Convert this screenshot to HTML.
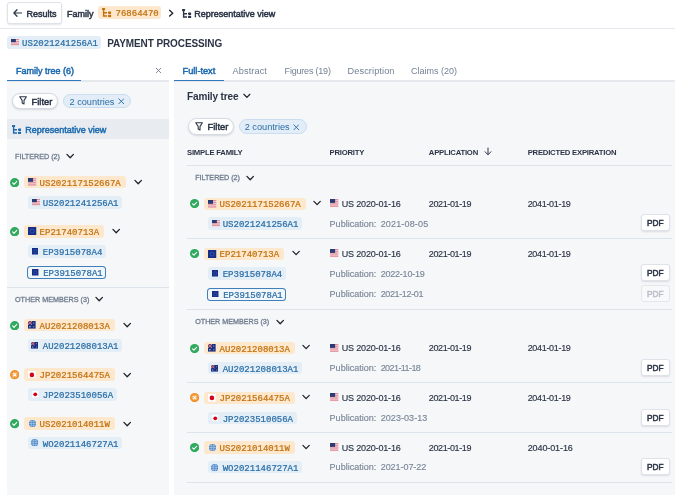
<!DOCTYPE html>
<html lang="en">
<head>
<meta charset="utf-8">
<title>Family tree - PAYMENT PROCESSING</title>
<style>
*{box-sizing:border-box;margin:0;padding:0}
html,body{width:675px;height:495px;overflow:hidden;background:#fff}
body{font-family:"Liberation Sans",sans-serif;font-size:9px;color:#2b3446;position:relative}
#app{position:absolute;left:0;top:0;width:675px;height:495px;background:#fff;will-change:transform}
.abs{position:absolute}
.row{position:absolute;display:flex;align-items:center;white-space:nowrap}
.md{font-weight:normal;-webkit-text-stroke:0.5px currentColor}
#topbar{position:absolute;left:0;top:0;width:675px;height:29px;border-bottom:1px solid #e4e8ed;background:#fff}
.btn{position:absolute;display:flex;align-items:center;justify-content:center;background:#fff;border:1px solid #dfe3e9;border-radius:3px;box-shadow:0 1px 2px rgba(40,50,70,.13);-webkit-text-stroke:0.5px currentColor;color:#2b3446;white-space:nowrap}
.chip{display:inline-flex;align-items:center;height:12.5px;border-radius:3px;padding:0 0 0 4.5px;font-family:"Liberation Mono",monospace;font-size:9.03px;white-space:nowrap;-webkit-text-stroke:0.22px currentColor}
.chip .t{position:relative;top:1.2px}
.chip.o{background:#fde8cd;color:#c2710f}
.chip.b{background:#e4eef7;color:#2a6ea6}
.chip.sel{background:#f1f6fb;box-shadow:inset 0 0 0 1px #3f7fba;border-radius:3.5px}
.flag{display:inline-flex;align-items:center;width:11.3px;flex:none}
.flag svg{display:block;flex:none}
.caps{color:#6f7d90;-webkit-text-stroke:0.3px currentColor}
.pill{position:absolute;display:flex;align-items:center;border-radius:8.5px;white-space:nowrap}
.pill.f{background:#fff;border:1px solid #d5dbe3;box-shadow:0 1px 2px rgba(40,50,70,.16);-webkit-text-stroke:0.5px currentColor;color:#2b3446}
.pill.c{background:#e2edf7;border:1px solid #cbddee;color:#2a6ea6}
.hr{position:absolute;height:1px;background:#dce3eb}
.st{position:absolute;width:9.4px;height:9.4px}
.chev{display:inline-block;width:8.4px;height:6.3px;flex:none}
#left{position:absolute;left:7px;top:81px;width:162px;height:414px;background:#f6f7f9}
#right{position:absolute;left:174px;top:82px;width:501px;height:413px;background:#f6f7f9}
.tab{position:absolute;top:65.8px;height:11px;line-height:11px;font-size:9px;color:#748295;white-space:nowrap}
.tab.on{color:#1e6bb0;-webkit-text-stroke:0.5px currentColor}
.th{position:absolute;top:148px;font-size:7.700px;letter-spacing:-0.215px;font-weight:bold;color:#2b3446;line-height:10px;white-space:nowrap}
.td{position:absolute;font-size:9px;line-height:11px;color:#2b3446;white-space:nowrap;-webkit-text-stroke:0.15px currentColor}
.muted{color:#7a8899}
.pdf{position:absolute;left:640.600px;width:29.200px;height:17px;font-size:8.300px;padding-top:1px}
.pdf.dis{color:#b9c0ca;box-shadow:none;border-color:#e3e7ec;background:#f8f9fa}
</style>
</head>
<body>
<svg width="0" height="0" style="position:absolute">
  <defs>
    <symbol id="us" viewBox="0 0 16 15" preserveAspectRatio="none"><rect width="16" height="15" fill="#f6e6e9"/><g fill="#d9727e"><rect y="0.500" width="16" height="1.800"/><rect y="4.200" width="16" height="1.800"/><rect y="8" width="16" height="1.800"/><rect y="11.800" width="16" height="1.800"/></g><rect width="9.500" height="7" fill="#2b3a73"/></symbol>
    <symbol id="eu" viewBox="0 0 16 15" preserveAspectRatio="none"><rect width="16" height="15" fill="#16308a"/><circle cx="8" cy="7.5" r="3.6" fill="none" stroke="#4a62ab" stroke-width="1.2"/></symbol>
    <symbol id="au" viewBox="0 0 16 15" preserveAspectRatio="none"><rect width="16" height="15" fill="#1b2f7d"/><path d="M0 0L8 7M8 0L0 7" stroke="#e9d6de" stroke-width="1.600"/><path d="M4 0V7M0 3.500H8" stroke="#d6475a" stroke-width="1.600"/><circle cx="4" cy="11" r="1.300" fill="#e8ecf6"/><circle cx="12" cy="4" r="1" fill="#e8ecf6"/><circle cx="12" cy="11" r="1" fill="#e8ecf6"/></symbol>
    <symbol id="jp" viewBox="0 0 16 16" preserveAspectRatio="none"><rect width="16" height="16" fill="#fff"/><circle cx="8" cy="8" r="4.700" fill="#d5001c"/></symbol>
    <symbol id="wo" viewBox="0 0 14 14"><circle cx="7" cy="7" r="7" fill="#3b7cc4"/><ellipse cx="7" cy="7" rx="3" ry="7" fill="none" stroke="#cfe0f3" stroke-width="1"/><path d="M0 7H14M1.200 3.600H12.800M1.200 10.400H12.800" stroke="#cfe0f3" stroke-width="1" fill="none"/></symbol>
    <symbol id="ok" viewBox="0 0 20 20"><circle cx="10" cy="10" r="10" fill="#2faa5e"/><path d="M5.6 10.4l3 3 5.8-6.200" fill="none" stroke="#fff" stroke-width="2.400" stroke-linecap="round" stroke-linejoin="round"/></symbol>
    <symbol id="no" viewBox="0 0 20 20"><circle cx="10" cy="10" r="10" fill="#f2922a"/><circle cx="10" cy="10" r="6" fill="#f6ac5c"/><path d="M7.200 7.200l5.600 5.600M12.800 7.200l-5.600 5.600" stroke="#fff" stroke-width="2.300" stroke-linecap="round"/></symbol>
    <symbol id="cv" viewBox="0 0 16 12"><path d="M1.800 2.600l6.200 6.400L14.200 2.600" fill="none" stroke="#20242c" stroke-width="2.500" stroke-linecap="round" stroke-linejoin="round"/></symbol>
    <symbol id="tree" viewBox="0 0 94 94"><path d="M16 18V80H50M16 47H50" fill="none" stroke="currentColor" stroke-width="14"/><rect x="0" y="0" width="31" height="21" rx="6" fill="currentColor"/><rect x="60" y="34" width="34" height="25" rx="8" fill="currentColor"/><rect x="60" y="68" width="34" height="25" rx="8" fill="currentColor"/></symbol>
    <symbol id="funnel" viewBox="0 0 16 18"><path d="M1.500 1.500H14.500L9.800 8.500V15.500L6.200 13.500V8.500Z" fill="none" stroke="#2b3446" stroke-width="2.100" stroke-linejoin="round"/></symbol>
    <symbol id="xx" viewBox="0 0 12 12"><path d="M1.500 1.500l9 9M10.500 1.500l-9 9" stroke="#2a6ea6" stroke-width="1.700" stroke-linecap="round"/></symbol>
  </defs>
</svg>
<div id="app">

<header>
<!-- TOP BAR -->
<nav id="topbar">
  <div class="btn" style="left:7px;top:2px;width:54.5px;height:21.6px;font-size:9px;padding:1.6px 0 0 0.5px">
    <svg width="9" height="8" viewBox="0 0 18 16" style="margin-right:4.300px;margin-left:0.700px;position:relative;top:-0.600px"><path d="M8 1.500L1.800 8l6.200 6.500M2 8H17" fill="none" stroke="#2b3446" stroke-width="2.400" stroke-linecap="round" stroke-linejoin="round"/></svg>Results
  </div>
  <div class="row md" style="left:67px;top:7.8px;height:12px;font-size:9px">Family</div>
  <div class="row chip o" style="left:98.3px;top:6.2px;width:62.7px;height:12.8px;padding:0 0 0 4px">
    <svg width="9.400" height="9.400" style="margin-right:3.800px;color:#c2710f;position:relative;top:0.500px"><use href="#tree"/></svg><span class="t">76864470</span>
  </div>
  <svg class="abs" style="left:167.8px;top:9px" width="6.4" height="8.400" viewBox="0 0 12 16"><path d="M3 2.500l6 5.500-6 5.500" fill="none" stroke="#20242c" stroke-width="2.500" stroke-linecap="round" stroke-linejoin="round"/></svg>
  <svg class="abs" style="left:182.300px;top:8.900px;color:#2b3446" width="9.400" height="9.400"><use href="#tree"/></svg>
  <div class="row md" style="left:194.3px;top:7.8px;height:12px;font-size:9px">Representative view</div>
</nav>

<!-- TITLE -->
<div class="row chip b" style="left:7.2px;top:36.3px;width:93.6px;height:12.7px;padding-left:3.6px"><span class="flag"><svg width="8.2" height="6.8" style="margin-left:0.2px"><use href="#us"/></svg></span><span class="t">US2021241256A1</span></div>
<h1 class="row" style="left:107.2px;top:37px;height:13px;font-size:10px;font-weight:bold;letter-spacing:-0.1px">PAYMENT PROCESSING</h1>
</header>

<aside>
<!-- LEFT PANEL -->
<div class="tab on" style="left:16px">Family tree (6)</div>
<svg class="abs" style="left:155px;top:67px" width="7" height="7" viewBox="0 0 14 14"><path d="M2.500 2.500l9 9M11.500 2.500l-9 9" stroke="#5f6b7b" stroke-width="1.600" stroke-linecap="round"/></svg>
<div id="left"></div>
<div class="hr" style="left:7px;top:80px;width:162px;height:2px;background:#e5e9ee"></div>
<div class="abs" style="left:7px;top:79.500px;width:74.300px;height:1.700px;background:#2f78bd"></div>
<div class="pill f" style="left:11.500px;top:92.700px;width:46.500px;height:16.500px;font-size:9.3px;padding:1.2px 0 0 6px">
  <svg width="8.200" height="9.300" style="margin-right:4.900px;position:relative;top:-0.400px"><use href="#funnel"/></svg>Filter
</div>
<div class="pill c" style="left:63px;top:93.600px;width:67.500px;height:14.800px;font-size:9.200px;padding:1.800px 0 0 5.500px">2 countries
  <svg width="6.600" height="6.600" style="margin-left:3.200px;position:relative;top:-0.500px"><use href="#xx"/></svg>
</div>
<div class="abs" style="left:7px;top:119px;width:162px;height:20.400px;background:#e8ecf0"></div>
<svg class="abs" style="left:12.100px;top:124.900px;color:#1e6bb0" width="9.400" height="9.400"><use href="#tree"/></svg>
<div class="row md" style="left:25.3px;top:124px;height:12px;color:#1e6bb0;font-size:9px">Representative view</div>
<div class="row caps" style="left:15px;top:151.5px;height:10px;font-size:7.2px">FILTERED (2)<svg class="chev" style="margin-left:6px;position:relative;top:-0.5px"><use href="#cv"/></svg></div>

<!-- left family US202117152667A -->
<svg class="st" style="left:9.600px;top:177.9px"><use href="#ok"/></svg>
<div class="row chip o" style="left:24px;top:175.9px;width:101.7px;height:12.5px;padding-left:4.3px"><span class="flag"><svg width="8.5" height="8.2" style="margin-left:0px"><use href="#us"/></svg></span><span class="t">US202117152667A</span></div>
<svg class="abs chev" style="left:133.7px;top:179.2px"><use href="#cv"/></svg>
<div class="row chip b" style="left:27.9px;top:196.1px;width:94.18px;height:12.5px;padding-left:3.6px"><span class="flag"><svg width="8.2" height="6.8" style="margin-left:0.2px"><use href="#us"/></svg></span><span class="t">US2021241256A1</span></div>
<!-- left family EP21740713A -->
<svg class="st" style="left:9.600px;top:227px"><use href="#ok"/></svg>
<div class="row chip o" style="left:24px;top:225px;width:80.02px;height:12.5px;padding-left:4.3px"><span class="flag"><svg width="8.5" height="8.2" style="margin-left:0px"><use href="#eu"/></svg></span><span class="t">EP21740713A</span></div>
<svg class="abs chev" style="left:112.02px;top:228.3px"><use href="#cv"/></svg>
<div class="row chip b" style="left:27.9px;top:245.3px;width:77.92px;height:12.5px;padding-left:3.6px"><span class="flag"><svg width="6.7" height="6.7" style="margin-left:0.2px"><use href="#eu"/></svg></span><span class="t">EP3915078A4</span></div>
<div class="row chip b sel" style="left:27.3px;top:265.5px;width:78.92px;height:13.5px;padding-left:4.6px"><span class="flag"><svg width="6.7" height="6.7" style="margin-left:0.2px"><use href="#eu"/></svg></span><span class="t">EP3915078A1</span></div>
<div class="hr" style="left:7px;top:287px;width:162px"></div>
<div class="row caps" style="left:15px;top:294.5px;height:10px;font-size:7.2px">OTHER MEMBERS (3)<svg class="chev" style="margin-left:6px;position:relative;top:-0.5px"><use href="#cv"/></svg></div>
<!-- left family AU2021208013A -->
<svg class="st" style="left:9.600px;top:320.7px"><use href="#ok"/></svg>
<div class="row chip o" style="left:24px;top:318.7px;width:90.86px;height:12.5px;padding-left:4.3px"><span class="flag"><svg width="7.8" height="7.8" style="margin-left:0.1px"><use href="#au"/></svg></span><span class="t">AU2021208013A</span></div>
<svg class="abs chev" style="left:122.86px;top:322px"><use href="#cv"/></svg>
<div class="row chip b" style="left:27.9px;top:339.2px;width:94.18px;height:12.5px;padding-left:3.6px"><span class="flag"><svg width="7.1" height="6.8" style="margin-left:-0.4px"><use href="#au"/></svg></span><span class="t">AU2021208013A1</span></div>
<!-- left family JP2021564475A -->
<svg class="st" style="left:9.600px;top:370.3px"><use href="#no"/></svg>
<div class="row chip o" style="left:24px;top:368.3px;width:90.86px;height:12.5px;padding-left:4.3px"><span class="flag"><svg width="7.8" height="7.8" style="margin-left:0px"><use href="#jp"/></svg></span><span class="t">JP2021564475A</span></div>
<svg class="abs chev" style="left:122.86px;top:371.6px"><use href="#cv"/></svg>
<div class="row chip b" style="left:27.9px;top:388.4px;width:88.76px;height:12.5px;padding-left:3.6px"><span class="flag"><svg width="6.5" height="6.7" style="margin-left:0.6px"><use href="#jp"/></svg></span><span class="t">JP2023510056A</span></div>
<!-- left family US2021014011W -->
<svg class="st" style="left:9.600px;top:419.2px"><use href="#ok"/></svg>
<div class="row chip o" style="left:24px;top:417.2px;width:90.86px;height:12.5px;padding-left:4.3px"><span class="flag"><svg width="7" height="7" style="margin-left:0.5px"><use href="#wo"/></svg></span><span class="t">US2021014011W</span></div>
<svg class="abs chev" style="left:122.86px;top:420.5px"><use href="#cv"/></svg>
<div class="row chip b" style="left:27.9px;top:436.6px;width:94.18px;height:12.5px;padding-left:3.6px"><span class="flag"><svg width="7.3" height="7.3" style="margin-left:0px"><use href="#wo"/></svg></span><span class="t">WO2021146727A1</span></div>

</aside>
<main>
<!-- RIGHT PANEL -->
<div class="tab on" style="left:182.6px;font-size:9.2px">Full-text</div>
<div class="tab" style="left:232.5px;font-size:9.2px;letter-spacing:0.1px">Abstract</div>
<div class="tab" style="left:284.6px;font-size:9px;letter-spacing:-0.2px">Figures (19)</div>
<div class="tab" style="left:347.5px;font-size:9.2px;letter-spacing:0.1px">Description</div>
<div class="tab" style="left:411px;font-size:9px">Claims (20)</div>
<div id="right"></div>
<div class="hr" style="left:174px;top:80px;width:501px;height:2px;background:#e5e9ee"></div>
<div class="abs" style="left:174px;top:79.500px;width:50px;height:1.700px;background:#2f78bd"></div>
<div class="row" style="left:187px;top:90.5px;height:12px;font-size:10px;font-weight:bold;letter-spacing:-0.13px">Family tree<svg class="chev" style="margin-left:4.400px;width:7.800px;height:5.900px;position:relative;top:-0.700px"><use href="#cv"/></svg></div>
<div class="pill f" style="left:187.500px;top:118px;width:46.500px;height:16.800px;font-size:9.300px;padding:1.600px 0 0 6px">
  <svg width="8.200" height="9.300" style="margin-right:4.900px;position:relative;top:-0.400px"><use href="#funnel"/></svg>Filter
</div>
<div class="pill c" style="left:239px;top:119px;width:67.500px;height:15px;font-size:9.200px;padding:1.800px 0 0 4.700px">2 countries
  <svg width="6.600" height="6.600" style="margin-left:3.200px;position:relative;top:-0.500px"><use href="#xx"/></svg>
</div>
<div class="th" style="left:187px">SIMPLE FAMILY</div>
<div class="th" style="left:329.6px">PRIORITY</div>
<div class="th" style="left:428.8px">APPLICATION</div>
<svg class="abs" style="left:484px;top:147.400px" width="8" height="9" viewBox="0 0 16 18"><path d="M8 2V15M2.200 9.500L8 15.500L13.800 9.500" fill="none" stroke="#2b3446" stroke-width="2" stroke-linecap="round" stroke-linejoin="round"/></svg>
<div class="th" style="left:527.7px">PREDICTED EXPIRATION</div>
<div class="hr" style="left:187px;top:165px;width:485px"></div>
<div class="row caps" style="left:195.2px;top:173.400px;height:10px;font-size:7.160px">FILTERED (2)<svg class="chev" style="margin-left:6.5px;position:relative;top:-0.5px"><use href="#cv"/></svg></div>

<!-- family row US202117152667A -->
<svg class="st" style="left:189.600px;top:199.1px;width:9.200px;height:9.200px"><use href="#ok"/></svg>
<div class="row chip o" style="left:204px;top:197.6px;width:101.7px;height:12.2px;padding-left:4.3px"><span class="flag"><svg width="8.5" height="8.2" style="margin-left:0px"><use href="#us"/></svg></span><span class="t">US202117152667A</span></div>
<svg class="abs chev" style="left:313.3px;top:200px;width:8.200px;height:6.200px"><use href="#cv"/></svg>
<svg class="abs" style="left:330px;top:199.4px" width="8.600" height="8.400"><use href="#us"/></svg>
<div class="td" style="left:341.7px;top:198.8px;letter-spacing:-0.165px">US 2020-01-16</div>
<div class="td" style="left:428.8px;top:198.8px;letter-spacing:-0.37px">2021-01-19</div>
<div class="td" style="left:527.7px;top:198.8px;letter-spacing:-0.32px">2041-01-19</div>
<div class="row chip b" style="left:207.8px;top:217.4px;width:94.18px;height:12.4px;padding-left:3.6px"><span class="flag"><svg width="8.2" height="6.8" style="margin-left:0.2px"><use href="#us"/></svg></span><span class="t">US2021241256A1</span></div>
<div class="td muted" style="left:329.6px;top:218.7px;letter-spacing:0.02px">Publication: <span style="position:absolute;left:51.100px;top:0;letter-spacing:0.16px">2021-08-05</span></div>
<div class="btn pdf" style="top:214.4px">PDF</div>
<div class="hr" style="left:187px;top:238px;width:485px"></div>
<!-- family row EP21740713A -->
<svg class="st" style="left:189.600px;top:249.1px;width:9.200px;height:9.200px"><use href="#ok"/></svg>
<div class="row chip o" style="left:204px;top:247.6px;width:80.02px;height:12.2px;padding-left:4.3px"><span class="flag"><svg width="8.5" height="8.2" style="margin-left:0px"><use href="#eu"/></svg></span><span class="t">EP21740713A</span></div>
<svg class="abs chev" style="left:291.62px;top:250px;width:8.200px;height:6.200px"><use href="#cv"/></svg>
<svg class="abs" style="left:330px;top:249.4px" width="8.600" height="8.400"><use href="#us"/></svg>
<div class="td" style="left:341.7px;top:248.8px;letter-spacing:-0.165px">US 2020-01-16</div>
<div class="td" style="left:428.8px;top:248.8px;letter-spacing:-0.37px">2021-01-19</div>
<div class="td" style="left:527.7px;top:248.8px;letter-spacing:-0.32px">2041-01-19</div>
<div class="row chip b" style="left:207.8px;top:267.3px;width:77.92px;height:12.4px;padding-left:3.6px"><span class="flag"><svg width="6.7" height="6.7" style="margin-left:0.2px"><use href="#eu"/></svg></span><span class="t">EP3915078A4</span></div>
<div class="td muted" style="left:329.6px;top:268.6px;letter-spacing:0.02px">Publication: <span style="position:absolute;left:51.100px;top:0;letter-spacing:-0.22px">2022-10-19</span></div>
<div class="btn pdf" style="top:264.3px">PDF</div>
<div class="row chip b sel" style="left:207.3px;top:287.5px;width:78.92px;height:13.2px;padding-left:4.6px"><span class="flag"><svg width="6.7" height="6.7" style="margin-left:0.2px"><use href="#eu"/></svg></span><span class="t">EP3915078A1</span></div>
<div class="td muted" style="left:329.6px;top:289.2px;letter-spacing:0.02px">Publication: <span style="position:absolute;left:51.100px;top:0;letter-spacing:-0.37px">2021-12-01</span></div>
<div class="btn pdf dis" style="top:284.9px">PDF</div>
<div class="hr" style="left:187px;top:308.5px;width:485px"></div>
<div class="row caps" style="left:195.2px;top:317.400px;height:10px;font-size:7.160px">OTHER MEMBERS (3)<svg class="chev" style="margin-left:6.500px;position:relative;top:-0.500px"><use href="#cv"/></svg></div>
<!-- family row AU2021208013A -->
<svg class="st" style="left:189.600px;top:343.5px;width:9.200px;height:9.200px"><use href="#ok"/></svg>
<div class="row chip o" style="left:204px;top:342px;width:90.86px;height:12.2px;padding-left:4.3px"><span class="flag"><svg width="7.8" height="7.8" style="margin-left:0.1px"><use href="#au"/></svg></span><span class="t">AU2021208013A</span></div>
<svg class="abs chev" style="left:302.46px;top:344.4px;width:8.200px;height:6.200px"><use href="#cv"/></svg>
<svg class="abs" style="left:330px;top:343.8px" width="8.600" height="8.400"><use href="#us"/></svg>
<div class="td" style="left:341.7px;top:343.2px;letter-spacing:-0.165px">US 2020-01-16</div>
<div class="td" style="left:428.8px;top:343.2px;letter-spacing:-0.37px">2021-01-19</div>
<div class="td" style="left:527.7px;top:343.2px;letter-spacing:-0.32px">2041-01-19</div>
<div class="row chip b" style="left:207.8px;top:362.1px;width:94.18px;height:12.4px;padding-left:3.6px"><span class="flag"><svg width="7.1" height="6.8" style="margin-left:-0.4px"><use href="#au"/></svg></span><span class="t">AU2021208013A1</span></div>
<div class="td muted" style="left:329.6px;top:363.4px;letter-spacing:0.02px">Publication: <span style="position:absolute;left:51.100px;top:0;letter-spacing:-0.58px">2021-11-18</span></div>
<div class="btn pdf" style="top:359.1px">PDF</div>
<div class="hr" style="left:187px;top:382px;width:485px"></div>
<!-- family row JP2021564475A -->
<svg class="st" style="left:189.600px;top:393.1px;width:9.200px;height:9.200px"><use href="#no"/></svg>
<div class="row chip o" style="left:204px;top:391.6px;width:90.86px;height:12.2px;padding-left:4.3px"><span class="flag"><svg width="7.8" height="7.8" style="margin-left:0px"><use href="#jp"/></svg></span><span class="t">JP2021564475A</span></div>
<svg class="abs chev" style="left:302.46px;top:394px;width:8.200px;height:6.200px"><use href="#cv"/></svg>
<svg class="abs" style="left:330px;top:393.4px" width="8.600" height="8.400"><use href="#us"/></svg>
<div class="td" style="left:341.7px;top:392.8px;letter-spacing:-0.165px">US 2020-01-16</div>
<div class="td" style="left:428.8px;top:392.8px;letter-spacing:-0.37px">2021-01-19</div>
<div class="td" style="left:527.7px;top:392.8px;letter-spacing:-0.32px">2041-01-19</div>
<div class="row chip b" style="left:207.8px;top:411.7px;width:88.76px;height:12.4px;padding-left:3.6px"><span class="flag"><svg width="6.5" height="6.7" style="margin-left:0.6px"><use href="#jp"/></svg></span><span class="t">JP2023510056A</span></div>
<div class="td muted" style="left:329.6px;top:413px;letter-spacing:0.02px">Publication: <span style="position:absolute;left:51.100px;top:0;letter-spacing:0.06px">2023-03-13</span></div>
<div class="btn pdf" style="top:408.7px">PDF</div>
<div class="hr" style="left:187px;top:431.5px;width:485px"></div>
<!-- family row US2021014011W -->
<svg class="st" style="left:189.600px;top:442.9px;width:9.200px;height:9.200px"><use href="#ok"/></svg>
<div class="row chip o" style="left:204px;top:441.4px;width:90.86px;height:12.2px;padding-left:4.3px"><span class="flag"><svg width="7" height="7" style="margin-left:0.5px"><use href="#wo"/></svg></span><span class="t">US2021014011W</span></div>
<svg class="abs chev" style="left:302.46px;top:443.8px;width:8.200px;height:6.200px"><use href="#cv"/></svg>
<svg class="abs" style="left:330px;top:443.2px" width="8.600" height="8.400"><use href="#us"/></svg>
<div class="td" style="left:341.7px;top:442.6px;letter-spacing:-0.165px">US 2020-01-16</div>
<div class="td" style="left:428.8px;top:442.6px;letter-spacing:-0.37px">2021-01-19</div>
<div class="td" style="left:527.7px;top:442.6px;letter-spacing:-0.1px">2040-01-16</div>
<div class="row chip b" style="left:207.8px;top:461px;width:94.18px;height:12.4px;padding-left:3.6px"><span class="flag"><svg width="7.3" height="7.3" style="margin-left:0px"><use href="#wo"/></svg></span><span class="t">WO2021146727A1</span></div>
<div class="td muted" style="left:329.6px;top:462.3px;letter-spacing:0.02px">Publication: <span style="position:absolute;left:51.100px;top:0;letter-spacing:-0.05px">2021-07-22</span></div>
<div class="btn pdf" style="top:458px">PDF</div>
<div class="hr" style="left:187px;top:481.5px;width:485px"></div>
</main>
</div>
</body>
</html>
